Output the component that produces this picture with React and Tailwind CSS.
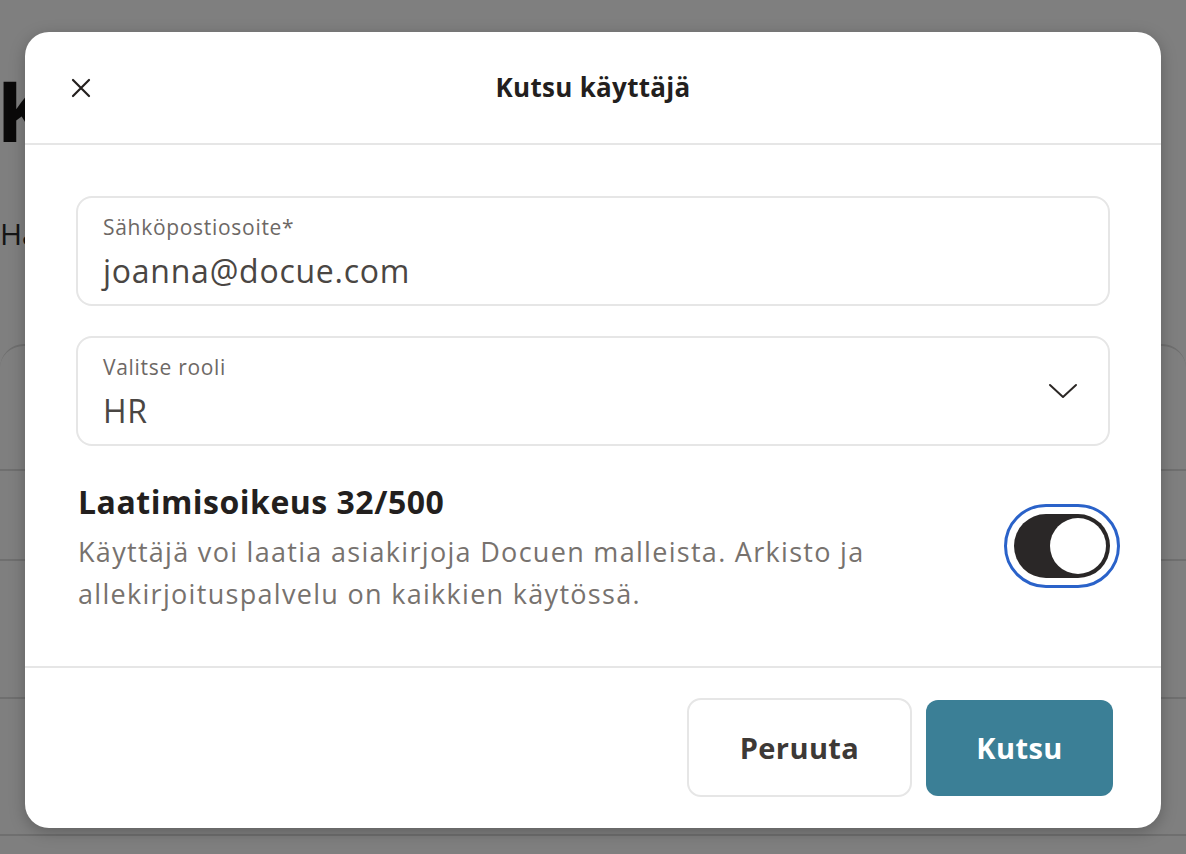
import { useState } from 'react';

const font = { fontFamily: '"Open Sans", "Noto Sans", sans-serif' };

function CloseIcon() {
  return (
    <svg width="22" height="22" viewBox="0 0 22 22" fill="none">
      <path d="M3 3L19 19M19 3L3 19" stroke="#231f1e" strokeWidth="2.2" strokeLinecap="round" />
    </svg>
  );
}

function Chevron() {
  return (
    <svg width="30" height="18" viewBox="0 0 30 18" fill="none">
      <path d="M2 3L15 15L28 3" stroke="#2b2725" strokeWidth="2" strokeLinecap="round" strokeLinejoin="round" />
    </svg>
  );
}

function Field({ label, value, right }) {
  return (
    <div className="h-[110px] rounded-[16px] border-2 border-[#e6e6e6] bg-white flex items-start pt-[16px] pl-[25px] pr-[30px]">
      <div className="flex-1 min-w-0">
        <p className="text-[21px] leading-[26px] text-[#6d6865] tracking-[0.7px]">{label}</p>
        <p className="mt-[11px] text-[32px] leading-[40px] text-[#4a4643] tracking-[0.75px]">{value}</p>
      </div>
      {right && <div className="self-center -mt-[16px]">{right}</div>}
    </div>
  );
}

export default function App() {
  const [enabled, setEnabled] = useState(true);

  return (
    <div className="relative w-full h-[854px] overflow-hidden bg-white" style={font}>
      {/* Page behind */}
      <div className="pt-[60px]">
        <h1 className="text-[84px] leading-[100px] font-bold text-[#151313] -ml-[4px]">Käyttäjät</h1>
        <p className="mt-[54px] text-[30px] leading-[40px] text-[#2b2b2b]">Hallinnoi käyttäjiä</p>
        <div className="mt-[90px] border-t-2 border-[#dedede] rounded-t-[24px]">
          <div className="h-[125px] border-b-2 border-[#dedede]" />
          <div className="h-[90px] border-b-2 border-[#dedede]" />
          <div className="h-[138px] border-b-2 border-[#dedede]" />
          <div className="h-[137px] border-b-2 border-[#dedede]" />
        </div>
      </div>

      {/* Overlay */}
      <div className="absolute inset-0 bg-black/50 flex justify-center pt-[32px]">
        <div className="w-[1136px] h-[796px] bg-white rounded-[24px] shadow-[0_4px_16px_rgba(0,0,0,0.25)] flex flex-col">
          <header className="relative h-[113px] shrink-0 border-b-2 border-[#e6e6e6] flex items-center justify-center">
            <button className="absolute left-[45px] top-[45px] p-0">
              <CloseIcon />
            </button>
            <h2 className="text-[26px] font-bold text-[#231f1e] tracking-[0.3px]">Kutsu käyttäjä</h2>
          </header>

          <div className="flex-1 px-[51px] pt-[51px]">
            <Field label="Sähköpostiosoite*" value="joanna@docue.com" />
            <div className="mt-[30px]">
              <Field label="Valitse rooli" value="HR" right={<Chevron />} />
            </div>

            <div className="mt-[36px] flex items-start">
              <div className="flex-1 pl-[2px]">
                <p className="text-[32px] leading-[40px] font-bold text-[#231f1e] tracking-[0.5px]">Laatimisoikeus 32/500</p>
                <p className="mt-[9px] text-[27px] leading-[42px] text-[#77726e] tracking-[1.3px]">
                  Käyttäjä voi laatia asiakirjoja Docuen malleista. Arkisto ja
                  <br />
                  allekirjoituspalvelu on kaikkien käytössä.
                </p>
              </div>
              <button
                onClick={() => setEnabled(v => !v)}
                className="mt-[22px] mr-[-10px] rounded-full border-[3px] border-[#2a62c9] p-[7px]"
              >
                <span className={`flex items-center w-[96px] h-[64px] rounded-full p-[4px] ${enabled ? 'bg-[#2a2727] justify-end' : 'bg-[#cfcfcf] justify-start'}`}>
                  <span className="w-[56px] h-[56px] rounded-full bg-white" />
                </span>
              </button>
            </div>
          </div>

          <footer className="h-[162px] shrink-0 border-t-2 border-[#e6e6e6] flex items-start justify-end gap-[14px] pt-[30px] pr-[48px]">
            <button className="w-[225px] h-[99px] rounded-[14px] border-2 border-[#e6e6e6] bg-white text-[29px] font-bold text-[#3d3936] tracking-[0.4px]">
              Peruuta
            </button>
            <button className="mt-[2px] w-[187px] h-[96px] rounded-[12px] bg-[#3b7f96] text-[29px] font-bold text-white tracking-[0.4px]">
              Kutsu
            </button>
          </footer>
        </div>
      </div>
    </div>
  );
}
